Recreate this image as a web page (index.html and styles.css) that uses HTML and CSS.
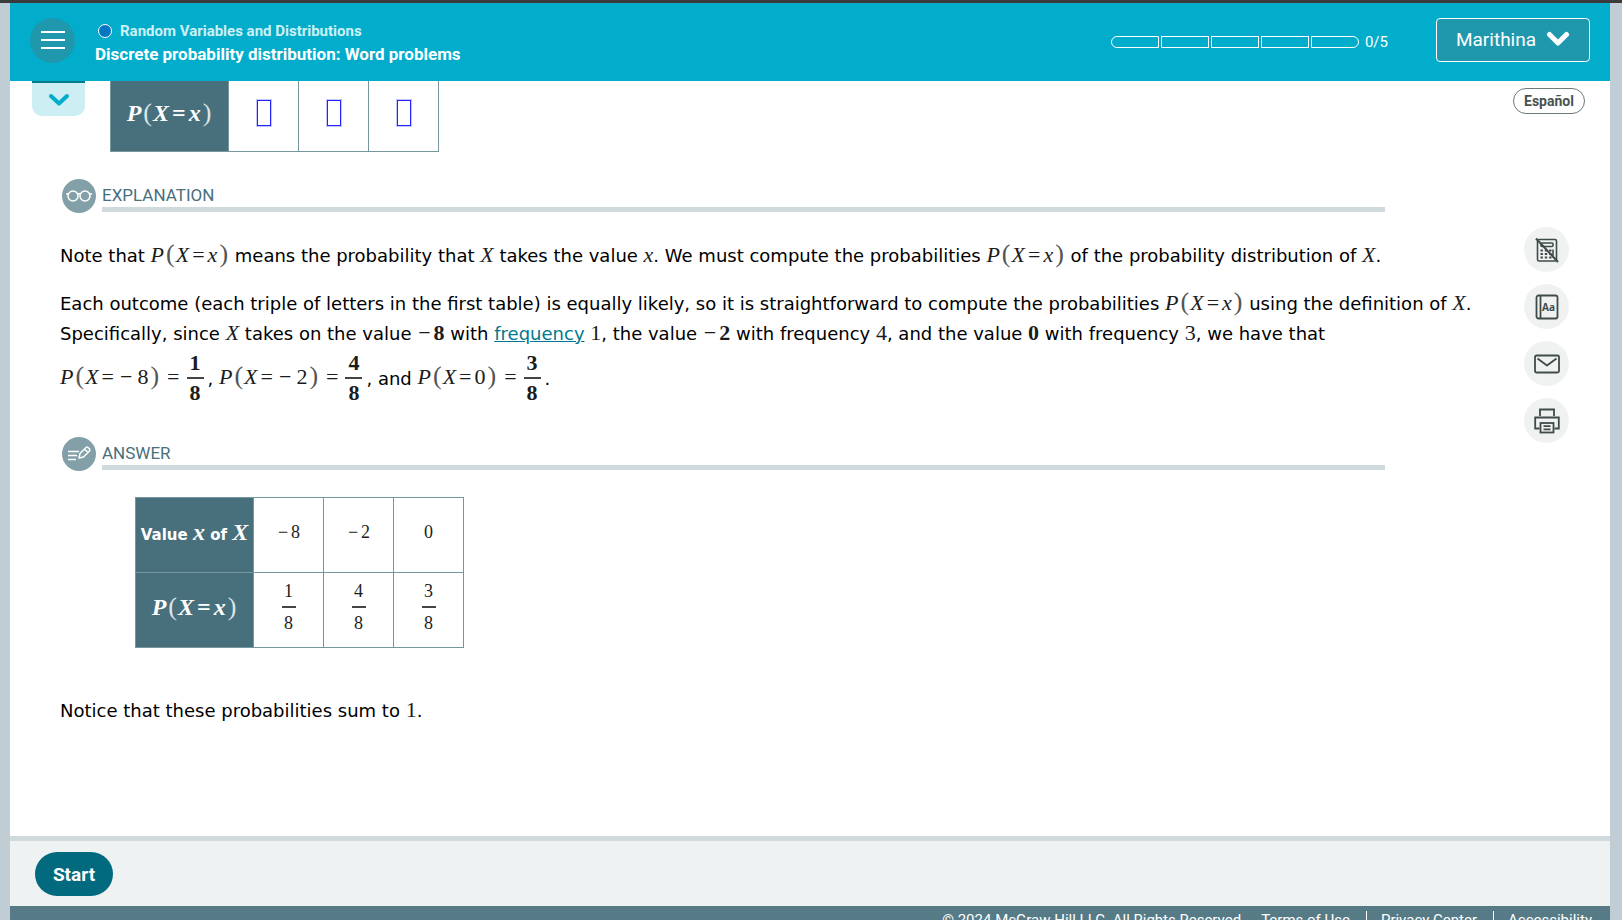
FILE: index.html
```html
<!DOCTYPE html>
<html lang="en">
<head>
<meta charset="utf-8">
<title>Discrete probability distribution: Word problems</title>
<link rel="stylesheet" href="styles.css">
</head>
<body>
<div class="shell">
  <header class="topbar">
    <button class="menu-btn" type="button" aria-label="Menu">
      <svg width="24" height="20" viewBox="0 0 24 20" fill="none" stroke="#fff" stroke-width="2"><path d="M0 2h24M0 10h24M0 18h24"/></svg>
    </button>
    <div class="titles">
      <div class="topic"><span class="dot"></span>Random Variables and Distributions</div>
      <h1 class="title">Discrete probability distribution: Word problems</h1>
    </div>
    <div class="progress">
      <span class="seg"></span><span class="seg"></span><span class="seg"></span><span class="seg"></span><span class="seg"></span>
      <span class="count">0/5</span>
    </div>
    <button class="user-btn" type="button">Marithina
      <svg width="24" height="18" viewBox="0 0 24 18" fill="none" stroke="#fff" stroke-width="5" stroke-linecap="round" stroke-linejoin="round"><path d="M3.5 4.500l8.500 8.500 8.500-8.500"/></svg>
    </button>
  </header>

  <main class="content">
    <button class="pull-tab" type="button" aria-label="Expand">
      <svg width="22" height="16" viewBox="0 0 22 16" fill="none" stroke="#02accb" stroke-width="4" stroke-linecap="round" stroke-linejoin="round"><path d="M3 4l8 7.500L19 4"/></svg>
    </button>
    <button class="lang-btn" type="button">Español</button>

    <nav class="tools">
      <button class="tool" type="button" aria-label="Calculator unavailable">
        <svg width="26" height="26" viewBox="0 0 26 26" fill="none" stroke="#3f4b49" stroke-width="1.600"><rect x="3.500" y="2.500" width="19" height="21.500" rx="1.500"/><rect x="7" y="6" width="12" height="3.500" rx="1"/><path stroke-width="2" stroke-dasharray="2.400 1.900" d="M6.500 13.500h11M6.500 17h11M6.500 20.500h11"/><path d="M19 12.500v8"/><path stroke-width="2" d="M2 1.500l22 23.500"/></svg>
      </button>
      <button class="tool" type="button" aria-label="Dictionary">
        <svg width="26" height="26" viewBox="0 0 26 26" fill="none" stroke="#3f4b49" stroke-width="1.800"><rect x="2.500" y="1.500" width="21" height="23" rx="2"/><path d="M6.500 1.500v23"/><text class="aa" x="8" y="17">Aa</text></svg>
      </button>
      <button class="tool" type="button" aria-label="Message">
        <svg width="26" height="26" viewBox="0 0 26 26" fill="none" stroke="#3f4b49" stroke-width="1.800" stroke-linejoin="round"><rect x="1" y="4.500" width="24" height="17" rx="1.500"/><path d="M3.500 7.500l9.500 7 9.500-7"/></svg>
      </button>
      <button class="tool" type="button" aria-label="Print">
        <svg width="26" height="26" viewBox="0 0 26 26" fill="none" stroke="#3f4b49" stroke-width="1.800"><path d="M6 8V1.500h14V8M5.500 20.500H1.200V9.500h23.600v11h-4.300"/><rect x="6.500" y="15" width="13" height="9.500"/><path d="M9.500 18.200h7M9.500 21.300h7"/></svg>
      </button>
    </nav>

    <table class="dist dist-cut">
      <tr>
        <th scope="row"><span class="m"><i>P</i><span class="par">(</span><i>X</i><span class="eq">=</span><i>x</i><span class="par">)</span></span></th>
        <td><span class="blank"></span></td><td><span class="blank"></span></td><td><span class="blank"></span></td>
      </tr>
    </table>

    <section>
      <div class="section-head">
        <svg width="34" height="34" viewBox="0 0 34 34" fill="none" stroke="#fff" stroke-width="1.500"><circle cx="17" cy="17" r="17" fill="#83a0a8" stroke="none"/><circle cx="11" cy="17" r="5"/><circle cx="23" cy="17" r="5"/><path d="M4 15h3M27 15h3M15.500 15.200q1.500-1.200 3 0"/></svg>
        <h2>EXPLANATION</h2>
      </div>
      <div class="prose">
        <p>Note that <span class="m"><i>P</i><span class="par">(</span><i>X</i><span class="eq">=</span><i>x</i><span class="par">)</span></span> means the probability that <span class="m"><i>X</i></span> takes the value <span class="m"><i>x</i></span>. We must compute the probabilities <span class="m"><i>P</i><span class="par">(</span><i>X</i><span class="eq">=</span><i>x</i><span class="par">)</span></span> of the probability distribution of <span class="m"><i>X</i></span>.</p>
        <p>Each outcome (each triple of letters in the first table) is equally likely, so it is straightforward to compute the probabilities <span class="m"><i>P</i><span class="par">(</span><i>X</i><span class="eq">=</span><i>x</i><span class="par">)</span></span> using the definition of <span class="m"><i>X</i></span>. Specifically, since <span class="m"><i>X</i></span> takes on the value <span class="m"><span class="neg">−</span><b>8</b></span> with <a href="#frequency">frequency</a> <span class="m">1</span>, the value <span class="m"><span class="neg">−</span><b>2</b></span> with frequency <span class="m">4</span>, and the value <span class="m"><b>0</b></span> with frequency <span class="m">3</span>, we have that<br>
        <span class="m"><i>P</i><span class="par">(</span><i>X</i><span class="eq">=</span><span class="neg arg">−</span>8<span class="par">)</span><span class="eq wide">=</span><span class="frac"><b>1</b><b>8</b></span></span>, <span class="m"><i>P</i><span class="par">(</span><i>X</i><span class="eq">=</span><span class="neg arg">−</span>2<span class="par">)</span><span class="eq wide">=</span><span class="frac"><b>4</b><b>8</b></span></span>, and <span class="m"><i>P</i><span class="par">(</span><i>X</i><span class="eq">=</span>0<span class="par">)</span><span class="eq wide">=</span><span class="frac"><b>3</b><b>8</b></span></span>.</p>
      </div>
    </section>

    <section>
      <div class="section-head">
        <svg width="34" height="34" viewBox="0 0 34 34" fill="none" stroke="#fff" stroke-width="1.500" stroke-linejoin="round"><circle cx="17" cy="17" r="17" fill="#83a0a8" stroke="none"/><path d="M6 14.500h11M6 18.500h9M6 22.500h8"/><path d="M17 21l1-4.500 6-6q1-.8 2 0l1.500 1.500q.8 1 0 2l-6 6zM22.500 12l3.500 3.500"/></svg>
        <h2>ANSWER</h2>
      </div>
      <table class="dist dist-answer">
        <tr>
          <th scope="row">Value <span class="m"><i>x</i></span> of <span class="m"><i>X</i></span></th>
          <td><span class="neg">−</span>8</td><td><span class="neg">−</span>2</td><td>0</td>
        </tr>
        <tr>
          <th scope="row"><span class="m"><i>P</i><span class="par">(</span><i>X</i><span class="eq">=</span><i>x</i><span class="par">)</span></span></th>
          <td><span class="frac"><span>1</span><span>8</span></span></td>
          <td><span class="frac"><span>4</span><span>8</span></span></td>
          <td><span class="frac"><span>3</span><span>8</span></span></td>
        </tr>
      </table>
      <p class="closing">Notice that these probabilities sum to <span class="m">1</span>.</p>
    </section>
  </main>

  <div class="actions"><button class="start-btn" type="button">Start</button></div>

  <footer class="legal">
    <span class="copy">© 2024 McGraw Hill LLC. All Rights Reserved.</span>
    <a href="#terms">Terms of Use</a>
    <a href="#privacy">Privacy Center</a>
    <a href="#accessibility">Accessibility</a>
  </footer>
</div>
</body>
</html>
```
FILE: styles.css
```css
* { box-sizing: border-box; }

body {
  margin: 0;
  overflow: hidden;
  background: #c1cdd4;
  font-family: "DejaVu Sans", Verdana, sans-serif;
  color: #000;
}

button {
  margin: 0;
  padding: 0;
  border: 0;
  font-family: Roboto, sans-serif;
  cursor: pointer;
}

.shell {
  display: flex;
  flex-direction: column;
  height: 100vh;
  border-top: 3px solid #3b3b3b;
  padding: 0 12px 0 10px;
}

/* Top bar */
.topbar {
  flex: none;
  display: flex;
  align-items: center;
  height: 78px;
  padding: 0 20px;
  background: #02accb;
  color: #fff;
  font-family: Roboto, sans-serif;
}

.menu-btn {
  display: grid;
  place-items: center;
  width: 45px;
  height: 45px;
  margin-bottom: 4px;
  border-radius: 50%;
  background: #1f98ae;
}

.titles {
  margin-left: 20px;
  padding-top: 2px;
}

.topic {
  display: flex;
  align-items: center;
  gap: 8px;
  padding-left: 3px;
  color: #cdf1f5;
  font-size: 15px;
  font-weight: 700;
  line-height: 22px;
}

.dot {
  width: 14px;
  height: 14px;
  border: 1px solid #fff;
  border-radius: 50%;
  background: #0477c2;
}

.title {
  margin: 0;
  font-size: 17px;
  font-weight: 700;
  line-height: 24px;
}

.progress {
  display: flex;
  align-items: center;
  gap: 2px;
  margin-left: auto;
}

.seg {
  width: 48px;
  height: 12px;
  border: 1px solid #fff;
}

.seg:first-child { border-radius: 6px 0 0 6px; }
.seg:nth-child(5) { border-radius: 0 6px 6px 0; }

.count {
  margin-left: 4px;
  font-size: 15px;
}

.user-btn {
  display: flex;
  align-items: center;
  justify-content: center;
  gap: 10px;
  width: 154px;
  height: 44px;
  margin: 0 0 4px 48px;
  padding-bottom: 2px;
  border: 1px solid #fff;
  border-radius: 4px;
  background: #1f98ae;
  color: #fff;
  font-size: 19px;
}

/* Scrolling content */
.content {
  position: relative;
  flex: 1;
  overflow: hidden;
  padding: 0 125px 0 50px;
  background: #fff;
  font-size: 18px;
  line-height: 30px;
}

.pull-tab {
  position: absolute;
  top: 0;
  left: 22px;
  width: 53px;
  height: 35px;
  padding-top: 4px;
  border-top: 2px solid #027a8e;
  border-radius: 0 0 10px 10px;
  background: #cdeef3;
}

.lang-btn {
  position: absolute;
  top: 7px;
  right: 25px;
  width: 72px;
  height: 26px;
  border: 1px solid #6d7a79;
  border-radius: 13px;
  background: #fff;
  color: #48524f;
  font-size: 14px;
  font-weight: 700;
}

.tools {
  position: absolute;
  top: 146px;
  right: 41px;
  display: grid;
  gap: 12px;
}

.tool {
  display: grid;
  place-items: center;
  width: 45px;
  height: 45px;
  border-radius: 50%;
  background: #f0f2f2;
}

.aa {
  fill: #3f4b49;
  stroke: none;
  font: 700 10px "Open Sans", sans-serif;
}

/* Math notation */
.m {
  color: #1c1c1c;
  font-family: "Liberation Serif", "Times New Roman", serif;
  font-size: 22px;
  line-height: 24px;
  white-space: nowrap;
}

.par {
  padding: 0 1px 0 2px;
  color: #555;
  font-size: 26px;
  font-weight: 400;
}

.eq { padding: 0 3px; }
.wide { padding: 0 7px; }
.neg { padding: 0 3px 0 1px; }
.arg { padding: 0 5px 0 3px; }

.frac {
  display: inline-grid;
  vertical-align: middle;
  text-align: center;
}

.frac > :first-child { border-bottom: 2px solid #444; }

.prose .frac {
  width: 17px;
  margin: 0 4px 3px 0;
  line-height: 28px;
}

/* Tables */
.dist {
  border-collapse: collapse;
  table-layout: fixed;
  width: 329px;
}

.dist th, .dist td {
  height: 75px;
  padding: 0;
  border: 1px solid #75979d;
  text-align: center;
}

.dist th {
  width: 118px;
  background: #486f7c;
  color: #fff;
  font-size: 15px;
  white-space: nowrap;
}

.dist th .m {
  color: #fff;
  font-size: 24px;
}

.dist th .par { color: #dde6e8; }

.dist td {
  padding-bottom: 6px;
  color: #1c1c1c;
  font-family: "Liberation Serif", "Times New Roman", serif;
  font-size: 18px;
}

.dist .frac { width: 14px; }
.dist-cut { margin-left: 50px; }
.dist-cut th, .dist-cut td { height: 70px; border-top: 0; }
.dist-cut td { padding-bottom: 10px; }
.dist-answer { margin: 26px 0 0 75px; }

.blank {
  display: inline-block;
  width: 14px;
  height: 26px;
  border: 1px solid #2323ff;
  outline: 1px solid #c5c5ff;
  vertical-align: middle;
}

/* Sections */
.section-head {
  display: grid;
  grid-template-columns: 34px 1fr;
  gap: 6px;
  align-items: center;
  margin: 27px 100px 0 2px;
}

.section-head h2 {
  margin: 0;
  padding-top: 4px;
  border-bottom: 5px solid #d0dadc;
  color: #486f7c;
  font-family: Roboto, sans-serif;
  font-size: 17px;
  font-weight: 400;
  line-height: 24px;
}

.prose { padding-top: 28px; }
.prose p { margin: 0 0 18px; }
.prose p:last-child { margin: 0; }
.prose a { color: #02788e; }
.closing { margin: 48px 0 0; }

/* Bottom bars */
.actions {
  flex: none;
  height: 70px;
  padding: 11px 25px;
  border-top: 5px solid #d0dadc;
  background: #eef2f3;
}

.start-btn {
  width: 78px;
  height: 44px;
  border-radius: 22px;
  background: #026a7f;
  color: #fff;
  font-size: 19px;
  font-weight: 700;
}

.legal {
  flex: none;
  display: flex;
  justify-content: flex-end;
  height: 14px;
  overflow: hidden;
  padding: 5px 18px 0 0;
  background: #567b87;
  color: #fff;
  font: 15px/18px Roboto, sans-serif;
}

.legal a {
  color: #fff;
  text-decoration: none;
  margin-left: 16px;
}

.legal a + a {
  padding-left: 14px;
  border-left: 1px solid #fff;
}
```
